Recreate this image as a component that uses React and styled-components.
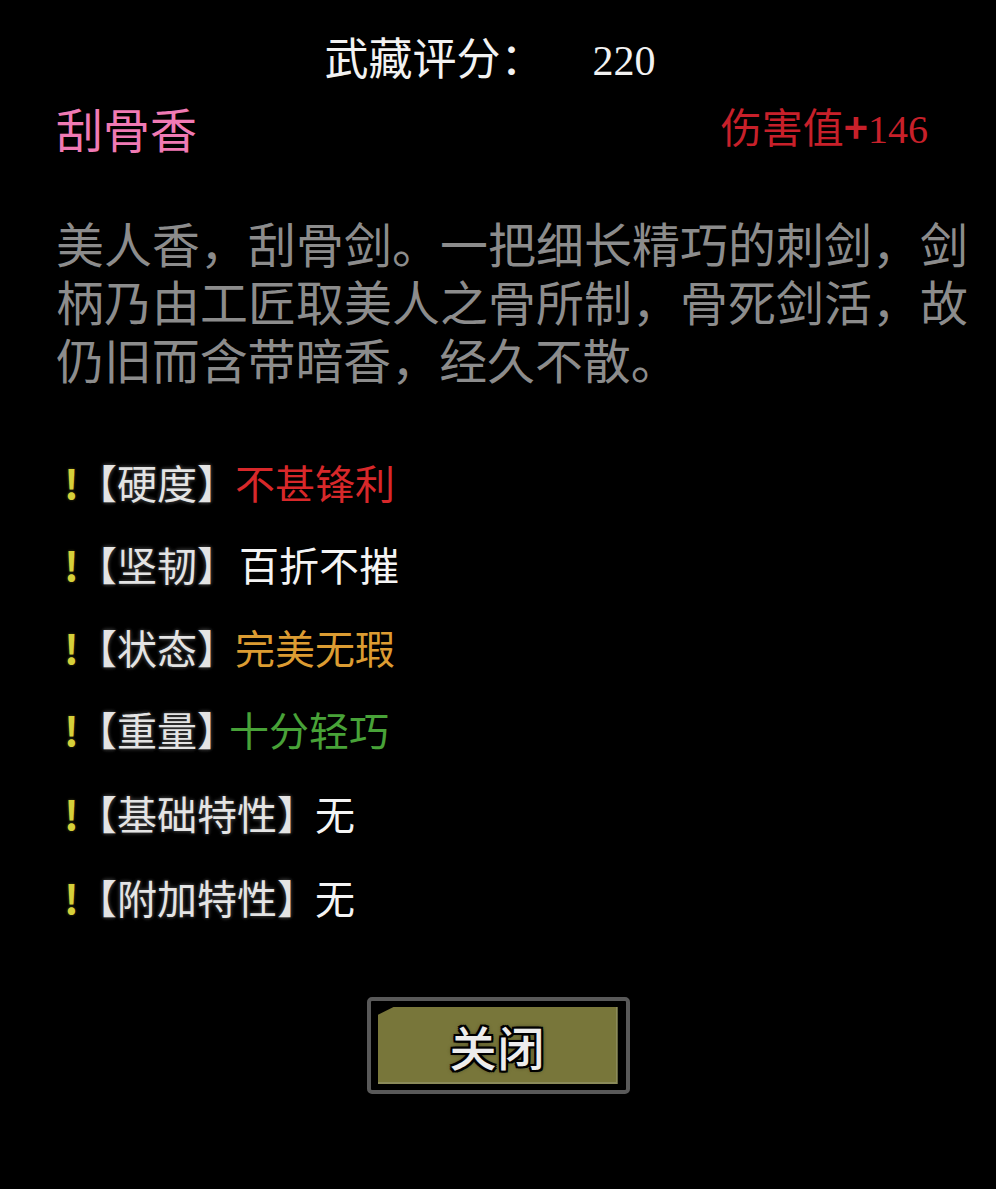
import React from 'react'
import styled, { createGlobalStyle } from 'styled-components'

const GlobalStyle = createGlobalStyle`
  html, body {
    margin: 0;
    padding: 0;
    background: #000;
  }
  body {
    font-family: 'Noto Sans CJK SC', 'Noto Sans', sans-serif;
  }
`

const Page = styled.div`
  width: 996px;
  height: 1189px;
  background: #000;
  box-sizing: border-box;
  padding: 26px 28px 0 56px;
  display: flex;
  flex-direction: column;
`
const Score = styled.div`
  display: flex;
  justify-content: center;
  align-items: baseline;
  gap: 48px;
  color: #f2f2f2;
  font-size: 44px;
  line-height: 60px;
  margin-left: -44px;
`
const ScoreNum = styled.span`
  font-family: 'Liberation Serif', serif;
  font-size: 42px;
`
const Header = styled.div`
  display: flex;
  justify-content: space-between;
  align-items: center;
  height: 64px;
  margin-top: 4px;
`
const Name = styled.div`
  color: #f07ab4;
  font-size: 47px;
  line-height: 1;
`
const Damage = styled.div`
  color: #c8202a;
  font-size: 41px;
  line-height: 1;
  margin-right: 40px;
  display: flex;
  align-items: baseline;
`
const Plus = styled.span`
  font-weight: 700;
`
const DamageNum = styled.span`
  font-family: 'Liberation Serif', serif;
  font-size: 40px;
`
const Desc = styled.p`
  margin: 54px 0 0;
  color: #8c8c8c;
  font-size: 47.9px;
  line-height: 58px;
  text-align: justify;
`
const Attrs = styled.div`
  display: flex;
  flex-direction: column;
  margin-top: 55px;
`
const Row = styled.div`
  display: flex;
  align-items: center;
  height: ${(p) => p.h}px;
  font-size: 40px;
  padding-left: 8px;
`
const Bang = styled.span`
  color: #d6d03a;
  font-weight: 700;
  text-shadow: 0 0 3px #2a2a10, 0 0 3px #2a2a10;
  width: 33px;
`
const Label = styled.span`
  color: #e4e4e4;
  font-feature-settings: 'halt';
  text-shadow: 0 0 3px #333, 0 0 4px #333, 0 0 5px #2a2a2a;
  margin-right: ${(p) => p.gap}px;
`
const Value = styled.span`
  color: ${(p) => p.color};
`
const Footer = styled.div`
  display: flex;
  justify-content: center;
  margin-top: 58px;
  margin-left: -28px;
`
const CloseButton = styled.button`
  width: 263px;
  height: 97px;
  box-sizing: border-box;
  border: 4px solid #595959;
  border-radius: 5px;
  background: #000;
  padding: 6px 8px 6px 7px;
  cursor: pointer;
`
const ButtonFace = styled.div`
  width: 100%;
  height: 100%;
  background: #78763a;
  box-shadow: inset -2px -2px 0 #8a8a5a;
  clip-path: polygon(16px 0, 100% 0, 100% 100%, 0 100%, 0 8px);
  display: flex;
  align-items: center;
  justify-content: center;
  font-family: 'Noto Sans CJK SC', sans-serif;
  font-size: 47px;
  font-weight: 500;
  color: #ececec;
  text-shadow: 2px 0 0 #000, -2px 0 0 #000, 0 2px 0 #000, 0 -2px 0 #000,
    2px 2px 0 #000, -2px -2px 0 #000, 2px -2px 0 #000, -2px 2px 0 #000,
    0 0 5px #000;
  letter-spacing: 1px;
`

const attrs = [
  { label: '【硬度】', value: '不甚锋利', color: '#d8282a', h: 79, gap: 18 },
  { label: '【坚韧】', value: '百折不摧', color: '#f4f4f4', h: 86, gap: 22 },
  { label: '【状态】', value: '完美无瑕', color: '#dc9c32', h: 79, gap: 18 },
  { label: '【重量】', value: '十分轻巧', color: '#48a238', h: 85, gap: 12 },
  { label: '【基础特性】', value: '无', color: '#f4f4f4', h: 84, gap: 18 },
  { label: '【附加特性】', value: '无', color: '#f4f4f4', h: 84, gap: 18 },
]

export default function App() {
  return (
    <>
      <GlobalStyle />
      <Page>
        <Score>
          <span>武藏评分：</span>
          <ScoreNum>220</ScoreNum>
        </Score>
        <Header>
          <Name>刮骨香</Name>
          <Damage>
            伤害值<Plus>+</Plus>
            <DamageNum>146</DamageNum>
          </Damage>
        </Header>
        <Desc>
          美人香，刮骨剑。一把细长精巧的刺剑，剑柄乃由工匠取美人之骨所制，骨死剑活，故仍旧而含带暗香，经久不散。
        </Desc>
        <Attrs>
          {attrs.map((a) => (
            <Row key={a.label} h={a.h}>
              <Bang>!</Bang>
              <Label gap={a.gap}>{a.label}</Label>
              <Value color={a.color}>{a.value}</Value>
            </Row>
          ))}
        </Attrs>
        <Footer>
          <CloseButton>
            <ButtonFace>关闭</ButtonFace>
          </CloseButton>
        </Footer>
      </Page>
    </>
  )
}
